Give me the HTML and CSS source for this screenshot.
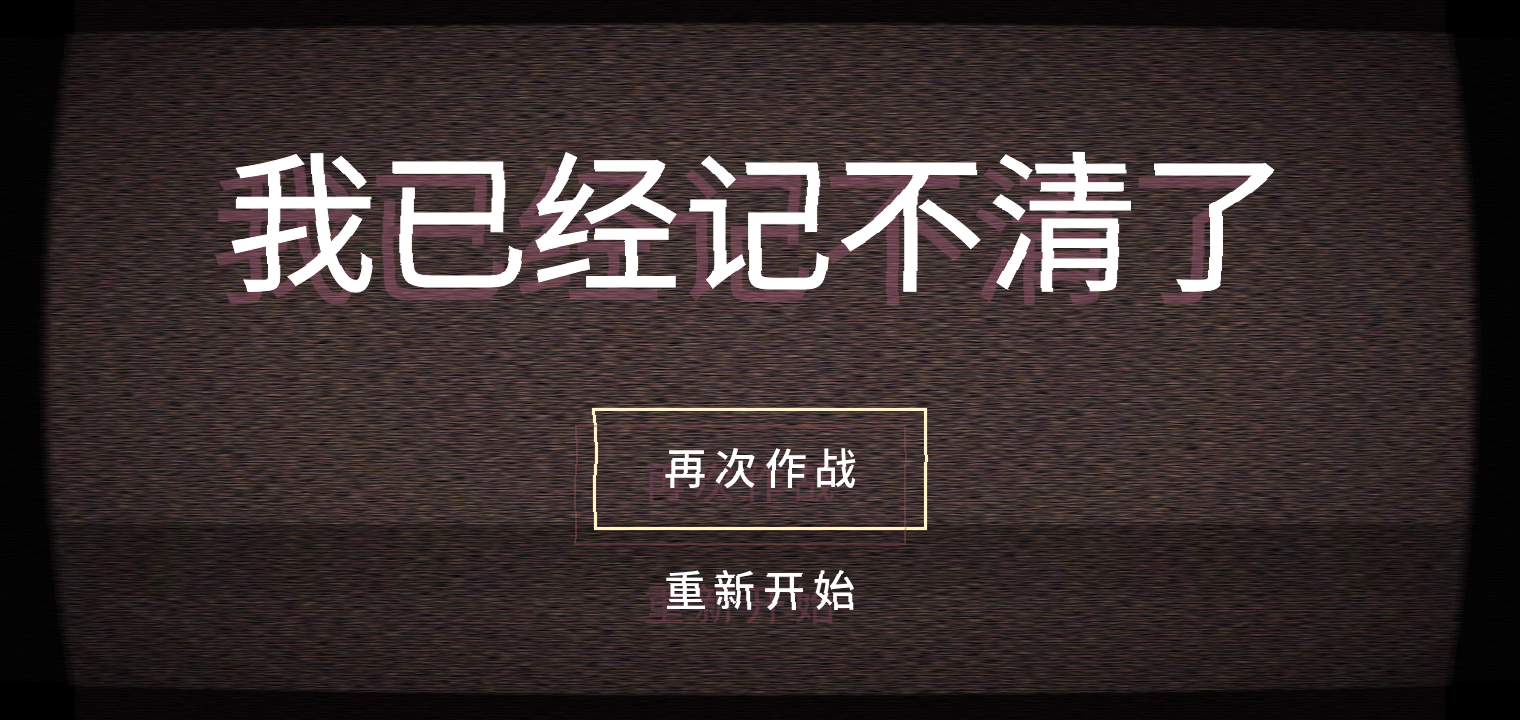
FILE: index.html
```html
<!DOCTYPE html>
<html lang="zh-CN">
<head>
    <meta charset="UTF-8">
    <meta name="viewport" content="width=device-width, initial-scale=1.0">
    <title>我已经记不清了</title>
    <link rel="stylesheet" href="styles.css">
</head>
<body>
    <svg class="screen" viewBox="0 0 1520 720" preserveAspectRatio="none" aria-hidden="true">
        <defs>
            <radialGradient id="glow" cx="0.5" cy="0.5" r="0.65">
                <stop offset="0" stop-color="#524340"/>
                <stop offset="0.5" stop-color="#483b38"/>
                <stop offset="0.8" stop-color="#312726"/>
                <stop offset="1" stop-color="#1b1515"/>
            </radialGradient>
            <linearGradient id="band" x1="0" y1="0" x2="0" y2="1">
                <stop offset="0" stop-color="#000" stop-opacity="0.32"/>
                <stop offset="1" stop-color="#000" stop-opacity="0.2"/>
            </linearGradient>
            <clipPath id="tube">
                <path d="M70 33 Q760 14 1450 33 Q1500 360 1448 686 Q760 704 72 686 Q20 360 70 33Z"/>
            </clipPath>
            <filter id="grain" x="0" y="0" width="100%" height="100%" color-interpolation-filters="sRGB">
                <feTurbulence type="fractalNoise" baseFrequency="0.06 0.85" numOctaves="2" seed="4"/>
                <feColorMatrix values="0.9 0.5 0 0 -0.22  0.75 0.6 0 0 -0.22  0.75 0.4 0.2 0 -0.21  0 0 0 0 1"/>
            </filter>
            <filter id="soft" x="-5%" y="-5%" width="110%" height="110%">
                <feGaussianBlur stdDeviation="5 1"/>
            </filter>
            <!-- sideways only: blue is held at the neutral value -->
            <filter id="wobble" x="-5%" y="-5%" width="110%" height="110%" color-interpolation-filters="sRGB">
                <feTurbulence type="fractalNoise" baseFrequency="0.001 0.03" numOctaves="1" seed="7"/>
                <feColorMatrix values="1 0 0 0 0  0 1 0 0 0  0 0 0 0 0.5  0 0 0 0 1"/>
                <feDisplacementMap in="SourceGraphic" scale="8" xChannelSelector="R" yChannelSelector="B"/>
            </filter>
            <pattern id="lines" width="4" height="3" patternUnits="userSpaceOnUse">
                <rect width="4" height="1" fill="#000" fill-opacity="0.3"/>
            </pattern>
        </defs>
        <rect width="1520" height="720" fill="#000"/>
        <rect y="38" width="1520" height="643" fill="#040304"/>
        <rect x="75" width="1370" height="720" fill="#0a0607"/>
        <g filter="url(#soft)">
            <g clip-path="url(#tube)">
                <rect width="1520" height="720" fill="url(#glow)"/>
                <rect y="524" width="1520" height="72" fill="url(#band)"/>
                <rect y="596" width="1520" height="124" fill="#000" fill-opacity="0.1"/>
            </g>
        </g>
        <rect class="grain" width="1520" height="720" filter="url(#grain)"/>
        <rect width="1520" height="720" fill="url(#lines)"/>
    </svg>

    <main class="game-over">
        <h1 class="title">我已经记不清了</h1>
        <div class="menu">
            <button class="menu-btn selected" type="button">再次作战</button>
            <button class="menu-btn" type="button">重新开始</button>
        </div>
    </main>
</body>
</html>
```
FILE: styles.css
```css
body {
    margin: 0;
    background-color: #000;
    color: white;
    font-family: "Noto Sans CJK SC", sans-serif;
}
.screen {
    position: fixed;
    top: 0;
    left: 0;
    width: 100%;
    height: 100%;
}
.grain {
    mix-blend-mode: overlay;
}
.game-over {
    position: relative;
    box-sizing: border-box;
    min-height: 100vh;
    padding: 94px 20px 60px;
    display: flex;
    flex-direction: column;
    align-items: center;
    gap: 74px;
    filter: url(#wobble);
}
.title {
    margin: 0;
    font-size: 150px;
    font-weight: 400;
    line-height: 240px;
    letter-spacing: 2px;
    white-space: nowrap;
    -webkit-text-stroke: 1px white;
    text-shadow: -18px 13px 1px rgba(150, 85, 110, 0.5);
}
.menu {
    display: flex;
    flex-direction: column;
    align-items: center;
}
.menu-btn {
    position: relative;
    min-width: 334px;
    height: 122px;
    padding: 0 0 8px 8px;
    background: none;
    border: 3px solid transparent;
    color: white;
    font-family: inherit;
    font-size: 42px;
    font-weight: 500;
    letter-spacing: 8px;
    text-shadow: -21px 14px 1px rgba(140, 75, 100, 0.4);
    cursor: pointer;
}
.menu-btn.selected {
    border-color: #fff4cc;
    box-shadow: 0 0 1px #e0a050, inset 0 0 1px #e0a050;
}
/* ghost of the selected frame */
.menu-btn.selected::after {
    content: "";
    position: absolute;
    top: 14px;
    left: -22px;
    width: 100%;
    height: 100%;
    border: 2px solid rgba(160, 85, 85, 0.4);
}
```
